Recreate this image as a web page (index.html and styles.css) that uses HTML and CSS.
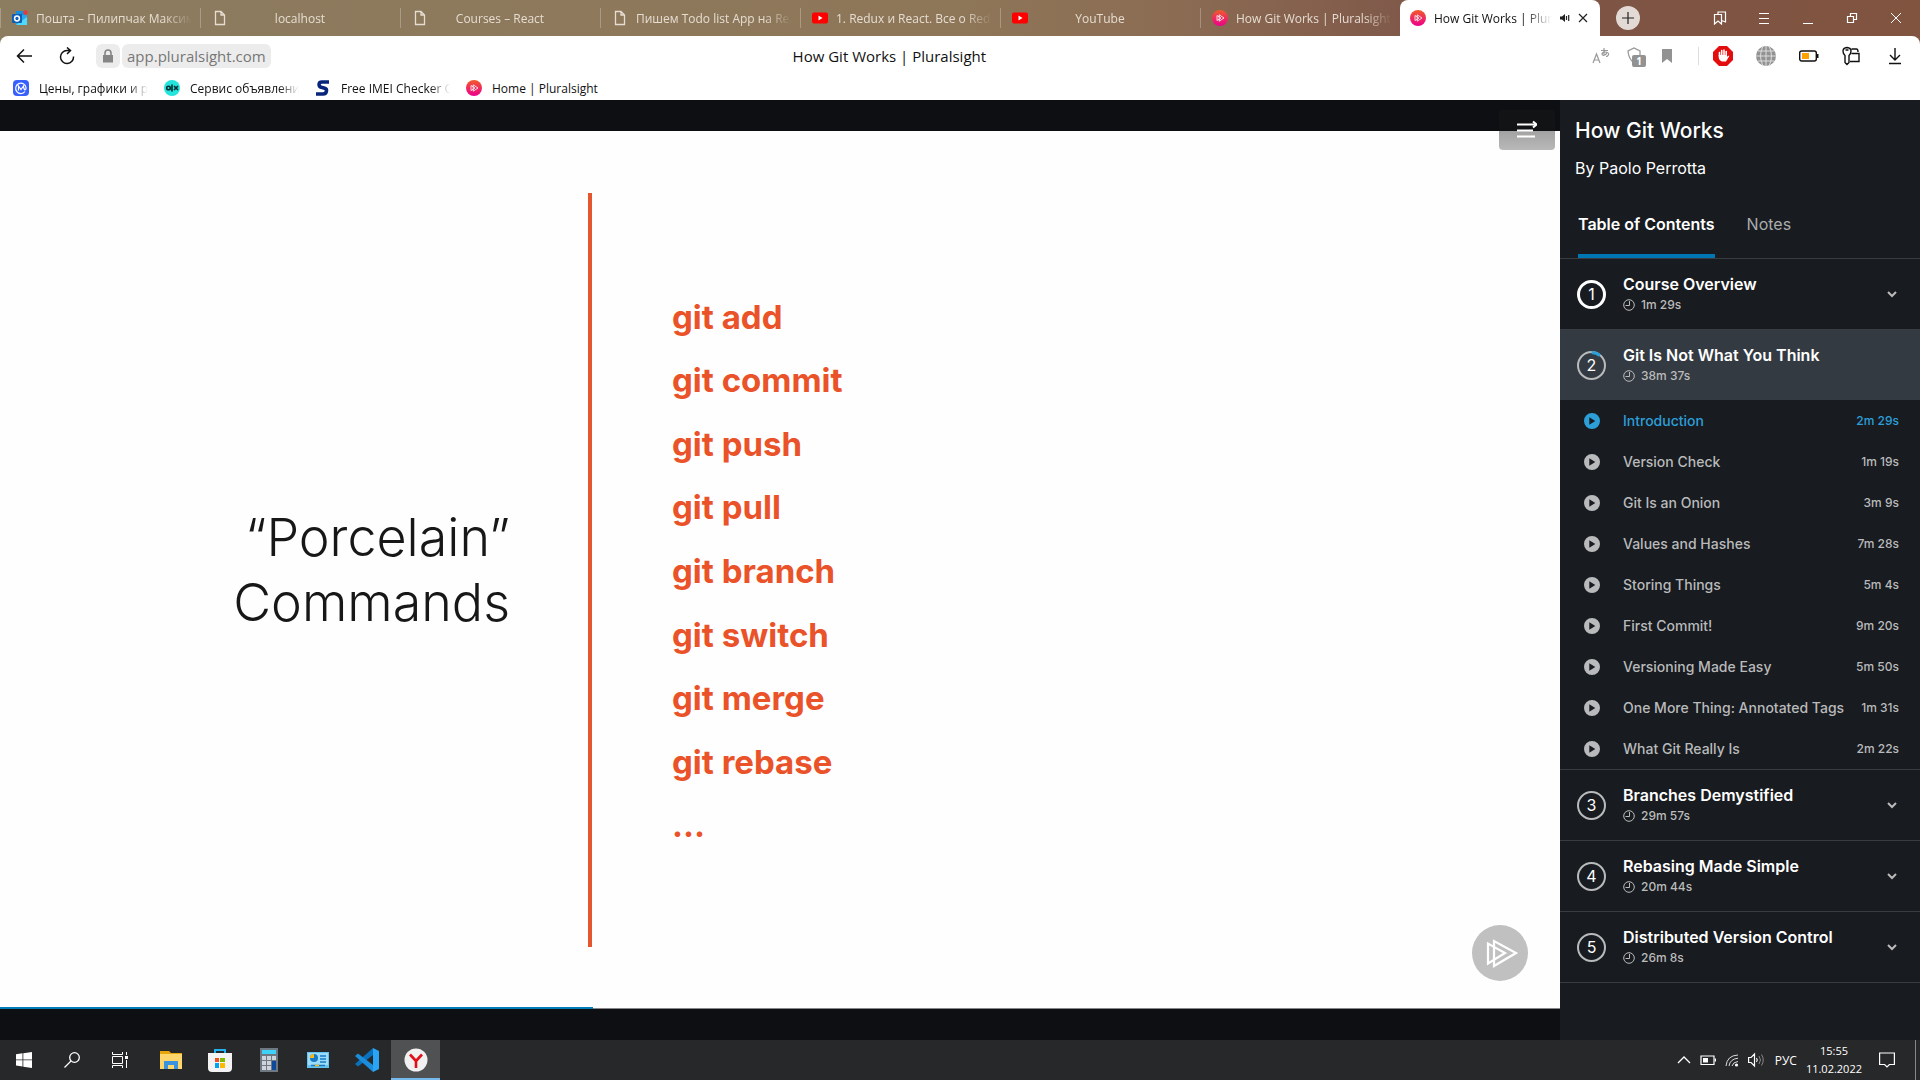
FILE: index.html
```html
<!DOCTYPE html>
<html lang="en">
<head>
<meta charset="utf-8">
<meta name="viewport" content="width=device-width, initial-scale=1">
<title>How Git Works | Pluralsight</title>
<link rel="stylesheet" href="styles.css">
</head>
<body>
<svg class="sprite" aria-hidden="true">
  <defs>
    <linearGradient id="ps-fill" x1="0" y1="0" x2="0" y2="1"><stop offset="0" stop-color="#f15b2a"/><stop offset="1" stop-color="#ec008c"/></linearGradient>
    <symbol id="i-page" viewBox="0 0 16 16"><path d="M3.500 1.500h5.500l3.500 3.500v9.500h-9zM9 1.500v3.500h3.500" fill="none" stroke="currentColor" stroke-width="1.300"/></symbol>
    <symbol id="i-ps" viewBox="0 0 16 16"><circle cx="8" cy="8" r="8" fill="url(#ps-fill)"/><path d="M7.200 4.800 12 8l-4.800 3.200zM5 5.500 9 8l-4 2.500z" fill="none" stroke="#fff" stroke-width=".8"/></symbol>
    <symbol id="i-youtube" viewBox="0 0 16 16"><rect y="2.500" width="16" height="11" rx="2" fill="#f00"/><path d="m6.500 5.500 4 2.500-4 2.500z" fill="#fff"/></symbol>
    <symbol id="i-clock" viewBox="0 0 12 12"><circle cx="6" cy="6" r="5.300" fill="none" stroke="currentColor"/><path d="M6.500 2v4.500H2.500" fill="none" stroke="currentColor"/></symbol>
    <symbol id="i-chevron" viewBox="0 0 12 12"><path d="m2 4 4 4 4-4" fill="none" stroke="currentColor" stroke-width="2"/></symbol>
    <symbol id="i-play" viewBox="0 0 16 16"><path fill="currentColor" fill-rule="evenodd" d="M8 0a8 8 0 1 0 0 16A8 8 0 0 0 8 0zM5.300 4.300 11.300 8l-6 3.700z"/></symbol>
  </defs>
</svg>

<header class="browser">
  <nav class="tabs" aria-label="Browser tabs">
    <button class="tab"><svg class="icon16" viewBox="0 0 16 16"><path d="M4 1h9v7H4z" fill="#1490df"/><path d="M4 5h11v10H4z" fill="#28a8ea"/><path d="m4 15 11-8v8z" fill="#50d9ff"/><rect y="4" width="10" height="9" rx="1" fill="#0f5fb5"/><circle cx="5" cy="8.500" r="2.400" fill="none" stroke="#fff" stroke-width="1.500"/><circle cx="13.500" cy="2.500" r="2.300" fill="#e43c3c"/></svg><span class="tab-label">Пошта – Пилипчак Максим</span></button>
    <button class="tab"><svg class="icon16"><use href="#i-page"/></svg><span class="tab-label">localhost</span></button>
    <button class="tab"><svg class="icon16"><use href="#i-page"/></svg><span class="tab-label">Courses – React</span></button>
    <button class="tab"><svg class="icon16"><use href="#i-page"/></svg><span class="tab-label">Пишем Todo list App на React</span></button>
    <button class="tab"><svg class="icon16"><use href="#i-youtube"/></svg><span class="tab-label">1. Redux и React. Все о Redux</span></button>
    <button class="tab"><svg class="icon16"><use href="#i-youtube"/></svg><span class="tab-label">YouTube</span></button>
    <button class="tab"><svg class="icon16"><use href="#i-ps"/></svg><span class="tab-label">How Git Works | Pluralsight</span></button>
    <button class="tab tab-active" aria-current="page"><svg class="icon16"><use href="#i-ps"/></svg><span class="tab-label">How Git Works | Pluralsight</span><svg class="icon10" viewBox="0 0 10 10"><path d="M0 3.500h2L5 1v8L2 6.500H0z" fill="#222"/><path d="M6.500 3v4M8.700 2v6" stroke="#222" stroke-width="1.200"/></svg><svg class="icon10" viewBox="0 0 10 10"><path d="m1 1 8 8M9 1 1 9" stroke="#222" stroke-width="1.200"/></svg></button>
    <button class="new-tab" aria-label="New tab"><svg class="icon12" viewBox="0 0 12 12"><path d="M6 0v12M0 6h12" stroke="#222" stroke-width="1.200"/></svg></button>
    <div class="window-controls">
      <button aria-label="Collections"><svg class="icon14" viewBox="0 0 14 14"><path d="M1.500 3.500h7V13L5 10l-3.500 3zM5 3.500V1h7.500v10l-4-1.500" fill="none" stroke="currentColor" stroke-width="1.200"/></svg></button>
      <button aria-label="Menu"><svg class="icon14" viewBox="0 0 14 14"><path d="M2 2.500h10M2 7.500h10M2 12.500h10" stroke="currentColor"/></svg></button>
      <button aria-label="Minimize"><svg class="icon14" viewBox="0 0 14 14"><path d="M2 12.500h10" stroke="currentColor"/></svg></button>
      <button aria-label="Restore"><svg class="icon14" viewBox="0 0 14 14"><path d="M2.500 5.500h6v6h-6zM5.500 5.500v-3h6v6h-3" fill="none" stroke="currentColor" stroke-width="1.200"/></svg></button>
      <button aria-label="Close"><svg class="icon14" viewBox="0 0 14 14"><path d="m2 2 10 10M12 2 2 12" stroke="currentColor"/></svg></button>
    </div>
  </nav>

  <div class="chrome">
    <div class="toolbar">
      <div class="nav-buttons">
        <button aria-label="Back"><svg class="icon16" viewBox="0 0 16 16"><path d="M16 8H1.500M8 1.500 1.500 8 8 14.500" fill="none" stroke="currentColor" stroke-width="1.500"/></svg></button>
        <button aria-label="Reload"><svg class="icon18" viewBox="0 0 18 18"><path d="M15.500 9.500A6.500 6.500 0 1 1 9 3.500h3M9 .5l3.500 3L9 7" fill="none" stroke="currentColor" stroke-width="1.500"/></svg></button>
      </div>
      <div class="address">
        <button class="lock" aria-label="Site security"><svg class="icon14" viewBox="0 0 14 14"><path d="M2 6h10v7.500H2z" fill="#858585"/><path d="M4 6V4a3 3 0 0 1 6 0v2" fill="none" stroke="#858585" stroke-width="1.600"/></svg></button>
        <button class="host">app.pluralsight.com</button>
      </div>
      <p class="page-title">How Git Works | Pluralsight</p>
      <div class="page-tools">
        <button aria-label="Translate"><svg class="icon18" viewBox="0 0 18 18"><path d="m1 16 3.500-9L8 16M2.300 13h4.400M9 3.500h7M12 1v6.500M15 5c-1 4-5 4-5 2s5-3 6.500-.5C17 8.500 15 9.500 14 9.500" fill="none" stroke="#999" stroke-width="1.200"/></svg></button>
        <button class="shield" aria-label="Protection, 1 item"><svg class="icon18" viewBox="0 0 18 18"><path d="M8 16C4 13 2.500 10 2 4l6-3 6 3v4" fill="none" stroke="#999" stroke-width="1.300"/></svg><span class="shield-count">1</span></button>
        <button aria-label="Bookmark"><svg class="icon14" viewBox="0 0 14 14"><path d="M2 0h10v14L7 10l-5 4z" fill="#929292"/></svg></button>
      </div>
      <div class="extensions">
        <button aria-label="Ad blocker"><svg class="icon20" viewBox="0 0 20 20"><path d="M6 0h8l6 6v8l-6 6H6l-6-6V6z" fill="#e40d0d"/><path d="M6.500 10V6.500M8.700 9V4.500M11 9V4M13.200 10V5.500" stroke="#fff" stroke-width="1.600" stroke-linecap="round"/><path d="M5.700 9H14v2l1.200-1.500 1 .8-3.200 5.200H9q-3.300-1.500-3.300-4.500z" fill="#fff"/></svg></button>
        <button aria-label="Web proxy"><svg class="icon20" viewBox="0 0 20 20"><circle cx="10" cy="10" r="10" fill="#929292"/><path d="M10 0v20M0 10h20M2 5h16M2 15h16M7 0q-5 10 0 20M13 0q5 10 0 20" fill="none" stroke="#ddd"/></svg></button>
        <button aria-label="Battery saver"><svg class="icon20" viewBox="0 0 20 20"><rect x=".7" y="5" width="16.600" height="10" rx="2" fill="none" stroke="#111" stroke-width="1.400"/><path d="M18.500 8v4" stroke="#111" stroke-width="2"/><path d="M3 7h7v6H3z" fill="#ffa200"/></svg></button>
        <button aria-label="Passwords"><svg class="icon20" viewBox="0 0 20 20"><path d="M3 9.500Q1 8 1 5q0-3 4-3.500 4 .5 4 3.500 0 3-2 4.500v7l-2 2-2-2zM3.500 4h3M9.500 3h5q1.500 0 1.500 3M9.500 7.500h7.500v8H8" fill="none" stroke="#111" stroke-width="1.400"/></svg></button>
        <button aria-label="Downloads"><svg class="icon18" viewBox="0 0 18 18"><path d="M9 1v12M4 8l5 5 5-5M3 16.500h12" fill="none" stroke="#111" stroke-width="1.400"/></svg></button>
      </div>
    </div>
    <nav class="bookmarks" aria-label="Bookmarks">
      <a href="#"><svg class="icon16" viewBox="0 0 16 16"><rect width="16" height="16" rx="4" fill="#3861fb"/><path d="M12 11.500A5.200 5.200 0 1 1 13 7.500q.2 2.500-1.300 2.300Q10.700 9 10.500 6L8 9.500 5.500 6v4.500" fill="none" stroke="#fff" stroke-width="1.200"/></svg><span>Цены, графики и рынки</span></a>
      <a href="#"><svg class="icon16" viewBox="0 0 16 16"><circle cx="8" cy="8" r="8" fill="#23e5db"/><circle cx="4.500" cy="8" r="1.800" fill="none" stroke="#002f34" stroke-width="1.600"/><path d="M8 4.500v7M10 6l4 4M14 6l-4 4" stroke="#002f34" stroke-width="1.700"/></svg><span>Сервис объявлений</span></a>
      <a href="#"><svg class="icon16" viewBox="0 0 16 16"><path d="M14 2H7Q4 2 4 4.500 4 7 7 7.500l2 .5q3 .7 2.500 3-.4 3-3.500 3H1" fill="none" stroke="#08257c" stroke-width="3.500"/></svg><span>Free IMEI Checker Online</span></a>
      <a href="#"><svg class="icon16"><use href="#i-ps"/></svg><span>Home | Pluralsight</span></a>
    </nav>
  </div>
</header>

<main class="course">
  <section class="player" aria-label="Video player">
    <div class="slide">
      <h1 class="slide-title">“Porcelain”<br>Commands</h1>
      <div class="slide-rule"></div>
      <ul class="commands">
        <li>git add</li><li>git commit</li><li>git push</li><li>git pull</li><li>git branch</li><li>git switch</li><li>git merge</li><li>git rebase</li><li>…</li>
      </ul>
      <svg class="watermark" viewBox="0 0 56 56" aria-label="Pluralsight"><circle cx="28" cy="28" r="28" fill="#c0c0c0"/><path d="M22 16v25l22-13zM16 18.500v20L33 28z" fill="none" stroke="#fff" stroke-width="2.200"/></svg>
      <div class="progress"><div class="progress-played" style="width:38%"></div></div>
    </div>
    <button class="collapse" aria-label="Hide table of contents"><svg class="icon20" viewBox="0 0 20 20"><path d="M0 4.500h18M0 10.500h16M0 16.500h18" stroke="#fff" stroke-width="2"/><path d="m16 1.500 3.500 3-3.500 3" fill="none" stroke="#fff" stroke-width="2"/></svg></button>
  </section>

  <aside class="sidebar">
    <h2 class="course-title">How Git Works</h2>
    <p class="author">By Paolo Perrotta</p>
    <div class="panel-tabs" role="tablist">
      <button role="tab" aria-selected="true" class="panel-tab">Table of Contents</button>
      <button role="tab" aria-selected="false" class="panel-tab">Notes</button>
    </div>
    <ol class="modules">
      <li><button class="module"><span class="badge badge-done">1</span><span class="module-text"><span class="module-name">Course Overview</span><span class="duration"><svg class="icon12"><use href="#i-clock"/></svg>1m 29s</span></span><svg class="icon12"><use href="#i-chevron"/></svg></button></li>
      <li><button class="module module-open" aria-expanded="true"><span class="badge badge-started">2<svg class="arc" viewBox="0 0 29 29"><path d="M14.500 1.500A13 13 0 0 1 23 4.700" fill="none" stroke="#2c9fd9" stroke-width="3"/></svg></span><span class="module-text"><span class="module-name">Git Is Not What You Think</span><span class="duration"><svg class="icon12"><use href="#i-clock"/></svg>38m 37s</span></span></button>
        <ol class="lessons">
          <li><a class="lesson lesson-current" href="#"><svg class="icon16"><use href="#i-play"/></svg><span class="lesson-name">Introduction</span><span class="time">2m 29s</span></a></li>
          <li><a class="lesson" href="#"><svg class="icon16"><use href="#i-play"/></svg><span class="lesson-name">Version Check</span><span class="time">1m 19s</span></a></li>
          <li><a class="lesson" href="#"><svg class="icon16"><use href="#i-play"/></svg><span class="lesson-name">Git Is an Onion</span><span class="time">3m 9s</span></a></li>
          <li><a class="lesson" href="#"><svg class="icon16"><use href="#i-play"/></svg><span class="lesson-name">Values and Hashes</span><span class="time">7m 28s</span></a></li>
          <li><a class="lesson" href="#"><svg class="icon16"><use href="#i-play"/></svg><span class="lesson-name">Storing Things</span><span class="time">5m 4s</span></a></li>
          <li><a class="lesson" href="#"><svg class="icon16"><use href="#i-play"/></svg><span class="lesson-name">First Commit!</span><span class="time">9m 20s</span></a></li>
          <li><a class="lesson" href="#"><svg class="icon16"><use href="#i-play"/></svg><span class="lesson-name">Versioning Made Easy</span><span class="time">5m 50s</span></a></li>
          <li><a class="lesson" href="#"><svg class="icon16"><use href="#i-play"/></svg><span class="lesson-name">One More Thing: Annotated Tags</span><span class="time">1m 31s</span></a></li>
          <li><a class="lesson" href="#"><svg class="icon16"><use href="#i-play"/></svg><span class="lesson-name">What Git Really Is</span><span class="time">2m 22s</span></a></li>
        </ol>
      </li>
      <li><button class="module"><span class="badge">3</span><span class="module-text"><span class="module-name">Branches Demystified</span><span class="duration"><svg class="icon12"><use href="#i-clock"/></svg>29m 57s</span></span><svg class="icon12"><use href="#i-chevron"/></svg></button></li>
      <li><button class="module"><span class="badge">4</span><span class="module-text"><span class="module-name">Rebasing Made Simple</span><span class="duration"><svg class="icon12"><use href="#i-clock"/></svg>20m 44s</span></span><svg class="icon12"><use href="#i-chevron"/></svg></button></li>
      <li><button class="module"><span class="badge">5</span><span class="module-text"><span class="module-name">Distributed Version Control</span><span class="duration"><svg class="icon12"><use href="#i-clock"/></svg>26m 8s</span></span><svg class="icon12"><use href="#i-chevron"/></svg></button></li>
    </ol>
  </aside>
</main>

<footer class="taskbar">
  <div class="apps">
    <div class="system-apps">
      <button aria-label="Start"><svg class="icon16" viewBox="0 0 16 16"><path d="m0 2.200 6.500-.9v6.200H0zM7.300 1.200 16 0v7.500H7.300zM0 8.300h6.500v6.200L0 13.600zM7.300 8.300H16V16l-8.700-1.300z" fill="#fff"/></svg></button>
      <button aria-label="Search"><svg class="icon16" viewBox="0 0 16 16"><circle cx="10.500" cy="5.500" r="4.800" fill="none" stroke="#fff" stroke-width="1.300"/><path d="M7 9 .5 15.500" stroke="#fff" stroke-width="1.300"/></svg></button>
      <button aria-label="Task view"><svg class="icon16" viewBox="0 0 16 16"><path d="M.5 0v2.500h10V0M.5 4.500h10v7H.5zM.5 16v-2.500h10V16M14.500 0v3M14.500 8v8" fill="none" stroke="#fff"/><path d="M13 4h3v3h-3z" fill="#fff"/></svg></button>
    </div>
    <div class="pinned-apps">
      <button aria-label="File Explorer"><svg class="icon24" viewBox="0 0 24 24"><path d="M1 3h9l2 2h11v16H1z" fill="#e5a50b"/><path d="M1 6h22v15H1z" fill="#ffd66b"/><path d="M5 21v-8h14v8h-4v-4H9v4z" fill="#3b93dd"/></svg></button>
      <button aria-label="Microsoft Store"><svg class="icon24" viewBox="0 0 24 24"><path d="M7 6V2h10v4" fill="none" stroke="#22b1f0" stroke-width="2"/><path d="M0 5h24v15q0 4-4 4H4q-4 0-4-4z" fill="#f3f3f3"/><path d="M7 10h4v4H7z" fill="#f25022"/><path d="M12 10h5v4h-5z" fill="#7fba00"/><path d="M7 15h4v5H7z" fill="#00a4ef"/><path d="M12 15h5v5h-5z" fill="#ffb900"/></svg></button>
      <button aria-label="Calculator"><svg class="icon24" viewBox="0 0 24 24"><path d="M3 0h18v24H3z" fill="#6d7882"/><path d="M5 2h14v4H5z" fill="#3ed2f7"/><path d="M5 8h4v4H5zM10 8h4v4h-4zM15 8h4v4h-4zM5 13h4v4H5zM10 13h4v4h-4zM5 18h4v4H5zM10 18h4v4h-4z" fill="#cfd4dc"/><path d="M15 13h4v9h-4z" fill="#0e4a9b"/></svg></button>
      <button aria-label="Control Panel"><svg class="icon24" viewBox="0 0 24 24"><path d="M1 4h22v16H1z" fill="#63c3f1"/><path d="M2 5h20v12H2z" fill="#9adcf9"/><circle cx="8" cy="10" r="4" fill="#1879c4"/><path d="M8 10V6a4 4 0 0 0-4 4z" fill="#fdb913"/><path d="M14 8h6M14 11h6M14 14h6M5 17.500h14" stroke="#1879c4" stroke-width="1.500"/><path d="M9 17.500h4" stroke="#fdb913" stroke-width="1.500"/></svg></button>
      <button aria-label="Visual Studio Code"><svg class="icon24" viewBox="0 0 24 24"><path d="m18 0 6 3v18l-6 3V0z" fill="#2aa4f4"/><path d="M18 7 3 18.500l-3-2.500L18 0z" fill="#0a72bd"/><path d="M18 17 3 5.500 0 8l18 16z" fill="#1b8ddb"/></svg></button>
      <button class="app-active" aria-label="Yandex Browser"><svg class="icon24" viewBox="0 0 24 24"><circle cx="12" cy="12" r="11.500" fill="#f1f1f1"/><path d="m6 6.500 6 6.500 6-6.500M12 13v7" fill="none" stroke="#e01018" stroke-width="2.600"/></svg></button>
    </div>
  </div>
  <div class="tray">
    <svg class="icon14" viewBox="0 0 14 14"><path d="m1 10 6-6 6 6" fill="none" stroke="#fff" stroke-width="1.300"/></svg>
    <svg class="icon16" viewBox="0 0 16 16"><path d="M1 4h13v8.500H1zM15.500 6.500v3" fill="none" stroke="#fff" stroke-width="1.200"/><path d="M3 6h5v4.500H3z" fill="#fff"/></svg>
    <svg class="icon14" viewBox="0 0 14 14"><path d="M1 13Q2 2.500 13 2M4 13Q5 6 13 5.200M7 13Q8 9 13 8.500" fill="none" stroke="#ddd"/><circle cx="11.500" cy="12" r="1.600" fill="#fff"/></svg>
    <svg class="icon16" viewBox="0 0 16 16"><path d="M.6 5.500h2.500L6.500 2v12l-3.400-3.500H.6zM8.500 6q1.500 2 0 4" fill="none" stroke="#fff" stroke-width="1.200"/><path d="M11 4q3 4 0 8M13.500 2.500q3.500 5.500 0 11" fill="none" stroke="#888"/></svg>
    <span class="language">РУС</span>
    <time class="clock" datetime="2022-02-11T15:55">15:55<br>11.02.2022</time>
    <button class="notifications" aria-label="Notifications"><svg class="icon16" viewBox="0 0 16 16"><path d="M.6 1h14.800v11.500h-5L8 15l-2.400-2.500h-5z" fill="none" stroke="#fff" stroke-width="1.200"/></svg></button>
  </div>
</footer>
</body>
</html>
```
FILE: styles.css
```css
* { box-sizing: border-box; }
body {
  margin: 0;
  min-height: 100vh;
  display: flex;
  flex-direction: column;
  background: #0d0f12;
  font-family: Inter, "Liberation Sans", sans-serif;
}
h1, h2, p, ol, ul { margin: 0; padding: 0; }
ol, ul { list-style: none; }
button { border: 0; padding: 0; background: none; color: inherit; font: inherit; }
a { color: inherit; text-decoration: none; }
svg { display: block; flex: none; }
.sprite { position: absolute; width: 0; height: 0; }
.icon10 { width: 10px; height: 10px; }
.icon12 { width: 12px; height: 12px; }
.icon14 { width: 14px; height: 14px; }
.icon16 { width: 16px; height: 16px; }
.icon18 { width: 18px; height: 18px; }
.icon20 { width: 20px; height: 20px; }
.icon24 { width: 24px; height: 24px; }

/* Browser chrome */
.browser {
  font-family: "Open Sans", "Noto Sans", sans-serif;
  font-size: 12px;
  background: linear-gradient(90deg, #8c7c60 0, #8e7658 50%, #8b6c53 61%, #7d5447 76%, #80543f 100%);
}
.tabs { display: flex; height: 36px; color: #e6ddd2; }
.tab {
  flex: 0 1 200px;
  min-width: 0;
  display: flex;
  align-items: center;
  gap: 8px;
  padding: 0 8px 0 12px;
  background: linear-gradient(#ffffff40, #ffffff40) left center / 1px 20px no-repeat;
}
.tab-label {
  flex: 1;
  min-width: 0;
  padding-right: 28px;
  overflow: hidden;
  white-space: nowrap;
  text-align: center;
  mask-image: linear-gradient(90deg, #000 calc(100% - 28px), transparent);
}
.tab-active { padding: 0 12px 0 10px; color: #111; background: #fff; border-radius: 8px 8px 0 0; }
.tab-active .tab-label { padding-right: 0; }
.new-tab {
  display: grid;
  place-items: center;
  width: 24px;
  height: 24px;
  margin: 6px 16px;
  border-radius: 50%;
  background: #e3dad6;
}
.window-controls { display: flex; margin-left: auto; padding-right: 2px; color: #fff; }
.window-controls button { display: grid; place-items: center; width: 44px; }
.chrome { background: #fff; color: #111; border-radius: 8px 8px 0 0; }
.toolbar { display: flex; align-items: center; height: 40px; padding: 0 4px 0 16px; }
.nav-buttons { display: flex; align-items: center; gap: 26px; }
.address { display: flex; gap: 2px; margin-left: 20px; font-size: 15px; color: #777; }
.lock, .host { height: 24px; border-radius: 6px; background: #ececec; }
.lock { display: grid; place-items: center; width: 24px; }
.host { padding: 0 5px; line-height: 24px; }
.page-title { flex: 1; padding-right: 84px; text-align: center; font-size: 15px; }
.page-tools { display: flex; align-items: center; gap: 16px; padding-right: 24px; border-right: 1px solid #ddd; }
.shield { position: relative; }
.shield-count {
  position: absolute;
  left: 6px;
  top: 8px;
  width: 14px;
  height: 12px;
  border-radius: 2px;
  background: #929292;
  color: #fff;
  font-size: 10px;
  font-weight: 700;
  line-height: 12px;
}
.extensions { display: flex; margin-left: 2px; }
.extensions button { display: grid; place-items: center; width: 43px; }
.bookmarks { display: flex; gap: 16px; height: 24px; padding: 0 13px; }
.bookmarks a { display: flex; align-items: center; gap: 10px; width: 135px; }
.bookmarks span { flex: 1; overflow: hidden; white-space: nowrap; mask-image: linear-gradient(90deg, #000 calc(100% - 20px), transparent); }
.bookmarks a:last-child span { mask-image: none; }

/* Video player */
.course { flex: 1; display: flex; }
.player { position: relative; flex: 1; display: flex; padding: 31px 0; background: #0d0f12; }
.slide {
  position: relative;
  flex: 1;
  display: grid;
  grid-template-columns: 588fr 4px 968fr;
  padding: 62px 0;
  background: #fefefe;
}
.slide-title {
  align-self: center;
  padding-right: 78px;
  color: #171717;
  font-size: 52px;
  font-weight: 300;
  line-height: 65px;
  text-align: right;
}
.slide-rule { background: #e4572e; }
.commands {
  display: grid;
  grid-auto-rows: 1fr;
  align-items: center;
  padding: 92px 0 90px 80px;
  color: #ea5329;
  font-size: 33px;
  font-weight: 700;
  line-height: 40px;
}
.watermark { position: absolute; right: 32px; bottom: 28px; width: 56px; height: 56px; }
.progress { position: absolute; left: 0; right: 0; bottom: 0; border-bottom: 1px solid #85878a; }
.progress-played { height: 2px; margin-bottom: -1px; background: #007db8; }
.collapse {
  position: absolute;
  right: 5px;
  top: 10px;
  display: grid;
  place-items: center;
  width: 56px;
  height: 40px;
  border-radius: 4px;
  background: linear-gradient(rgba(24, 24, 24, .5), rgba(24, 24, 24, .3));
}

/* Table of contents */
.sidebar { width: 360px; background: #181b20; color: #fff; }
.course-title { padding: 17px 15px 0; font-size: 21px; font-weight: 500; line-height: 28px; }
.author { padding: 11px 15px 0; font-size: 16px; line-height: 24px; }
.panel-tabs { display: flex; gap: 32px; margin-top: 10px; padding: 0 18px; border-bottom: 1px solid #393c41; }
.panel-tab { height: 68px; padding-top: 3px; border-bottom: 4px solid transparent; font-size: 16px; color: #aaacae; }
.panel-tab[aria-selected="true"] { border-color: #0077b3; color: #fff; font-weight: 600; }
.modules > li { border-bottom: 1px solid #393c41; }
.module { display: flex; align-items: center; gap: 17px; width: 100%; height: 70px; padding: 0 22px 0 17px; text-align: left; }
.module .icon12 { color: #bbb; }
.module-open { background: #343a42; }
.badge {
  position: relative;
  display: grid;
  place-items: center;
  width: 29px;
  height: 29px;
  border: 2px solid #b9babb;
  border-radius: 50%;
  font-size: 16px;
}
.badge-done { border: 3px solid #fff; }
.arc { position: absolute; inset: -2px; width: 29px; height: 29px; }
.module-text { flex: 1; display: grid; padding-bottom: 1px; }
.module-name { font-size: 16px; font-weight: 600; line-height: 22px; }
.duration { display: flex; align-items: center; gap: 6px; font-size: 12px; line-height: 20px; color: #bbb; font-weight: 500; }
.lesson { display: flex; align-items: center; height: 41px; padding: 0 21px 0 24px; font-size: 14px; font-weight: 500; color: #b9babb; }
.lesson-name { flex: 1; padding-left: 23px; white-space: nowrap; }
.time { font-size: 12px; }
.lesson-current { color: #2c9fd9; }

/* Taskbar */
.taskbar {
  display: flex;
  justify-content: space-between;
  height: 40px;
  background: #272829;
  color: #fff;
  font-family: "Open Sans", "Noto Sans", sans-serif;
  font-size: 12px;
}
.apps { display: flex; gap: 2px; }
.system-apps, .pinned-apps { display: flex; }
.apps button { display: grid; place-items: center; width: 48px; }
.pinned-apps button { width: 49px; }
.app-active { background: #505152; box-shadow: inset 0 -2px #76b9ed; }
.tray { display: flex; align-items: center; gap: 9px; margin-right: 4px; border-right: 1px solid #88898a; }
.language { padding-left: 2px; }
.clock { font-size: 11px; line-height: 18px; text-align: center; }
.notifications { display: grid; place-items: center; width: 32px; margin-right: 12px; }
```
